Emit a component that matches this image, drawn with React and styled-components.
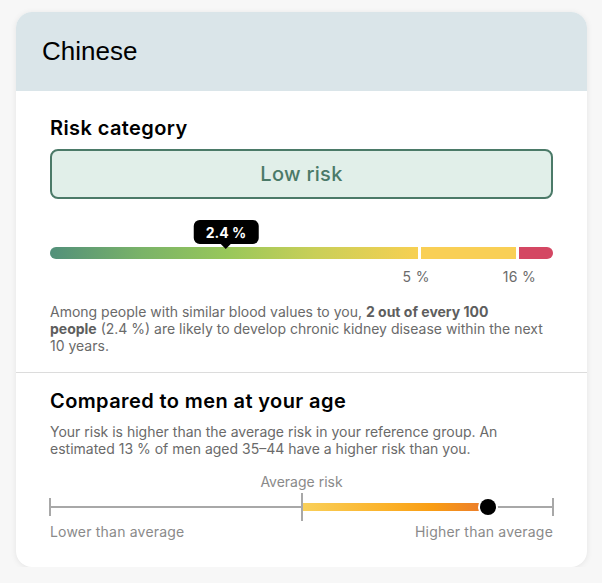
import styled, { createGlobalStyle } from "styled-components"

const GlobalStyle = createGlobalStyle`
  html, body {
    margin: 0;
    padding: 0;
    background: #f7f7f7;
  }
  body {
    font-family: Inter, "Noto Sans", sans-serif;
    color: #111;
  }
`;

const Card = styled.div`
  margin: 12px 15px 0 16px;
  width: 571px;
  background: #fff;
  border-radius: 16px;
  overflow: hidden;
  box-shadow: 0 1px 6px rgba(0, 0, 0, 0.08);
`;

const CardHeader = styled.div`
  background: #dae5e9;
  height: 79px;
  display: flex;
  align-items: center;
  padding: 0 26px;
  h1 {
    margin: 0;
    font-family: "Liberation Sans", Arial, sans-serif;
    font-weight: 400;
    font-size: 26px;
    color: #000;
  }
`;

const Section = styled.section`
  padding: ${(p) => p.$pad};
  border-top: ${(p) => (p.$divider ? "1px solid #dcdcdc" : "none")};
`;

const Heading = styled.h2`
  margin: 0 0 ${(p) => p.$gap || 10}px;
  font-size: 20px;
  line-height: 22px;
  letter-spacing: 0.4px;
  font-weight: 600;
  color: #000;
`;

const CategoryBox = styled.div`
  height: 46px;
  border: 2px solid #4b7a68;
  border-radius: 8px;
  background: #e1efe9;
  color: #4b7a68;
  font-size: 20px;
  font-weight: 500;
  letter-spacing: 0.3px;
  display: flex;
  align-items: center;
  justify-content: center;
`;

const BarWrap = styled.div`
  position: relative;
  margin-top: 48px;
`;

const Bar = styled.div`
  display: flex;
  gap: 3px;
  height: 12px;
`;

const Segment = styled.div`
  height: 100%;
  flex: ${(p) => p.$grow} 0 0;
  background: ${(p) => p.$bg};
  border-radius: ${(p) => p.$radius || "0"};
`;

const Tooltip = styled.div`
  position: absolute;
  bottom: 100%;
  margin-bottom: 3px;
  transform: translateX(-50%);
  background: #000;
  color: #fff;
  font-size: 14px;
  font-weight: 700;
  line-height: 17px;
  padding: 4px 12px 3px;
  border-radius: 6px;
  white-space: nowrap;
  &::after {
    content: "";
    position: absolute;
    left: 50%;
    top: 100%;
    transform: translateX(-50%);
    border: 5px solid transparent;
    border-top-color: #000;
    border-bottom: 0;
  }
`;

const Ticks = styled.div`
  position: relative;
  height: 18px;
  margin-top: 9px;
`;

const TickLabel = styled.span`
  position: absolute;
  top: 0;
  transform: translateX(-50%);
  font-size: 14px;
  line-height: 18px;
  letter-spacing: 0.3px;
  color: #6b6b6b;
  white-space: nowrap;
`;

const Text = styled.p`
  margin: ${(p) => p.$margin || "0"};
  font-size: 14px;
  line-height: 17px;
  color: #6a6a6a;
  b {
    font-weight: 700;
    color: #5e5e5e;
  }
`;

const Compare = styled.div`
  margin-top: 16px;
  display: flex;
  flex-direction: column;
`;

const AvgLabel = styled.div`
  text-align: center;
  font-size: 14px;
  line-height: 17px;
  color: #8a8a8a;
`;

const Scale = styled.div`
  position: relative;
  height: 28px;
  margin-top: 3px;
  &::before {
    content: "";
    position: absolute;
    left: 0;
    right: 0;
    top: 13px;
    height: 2px;
    background: #a8a8a8;
  }
`;

const Tick = styled.div`
  position: absolute;
  left: ${(p) => p.$left};
  top: ${(p) => (p.$tall ? 0 : 5)}px;
  width: 2px;
  height: ${(p) => (p.$tall ? 28 : 18)}px;
  margin-left: -1px;
  background: #a8a8a8;
`;

const RiskFill = styled.div`
  position: absolute;
  top: 10px;
  height: 8px;
  background: linear-gradient(90deg, #f9d05a 0%, #fbb22a 45%, #f99d14 70%, #ea7a2e 100%);
`;

const Dot = styled.div`
  position: absolute;
  top: 6px;
  width: 16px;
  height: 16px;
  margin-left: -8px;
  border-radius: 50%;
  background: #000;
  box-shadow: 0 0 0 2px #fff;
`;

const ScaleLabels = styled.div`
  display: flex;
  justify-content: space-between;
  margin-top: 2px;
  font-size: 14px;
  line-height: 17px;
  letter-spacing: 0.2px;
  color: #8a8a8a;
`;

function RiskBar({ value }) {
  return (
    <BarWrap>
      <Tooltip style={{ left: "35%" }}>{value} %</Tooltip>
      <Bar>
        <Segment
          $grow={367}
          $radius="6px 0 0 6px"
          $bg="linear-gradient(90deg, #52907a 0%, #7ab368 25%, #98c75a 48%, #c9cf58 72%, #f7d052 100%)"
        />
        <Segment $grow={95} $bg="#f9cf55" />
        <Segment $grow={34} $radius="0 6px 6px 0" $bg="#d44763" />
      </Bar>
      <Ticks>
        <TickLabel style={{ left: "72.8%" }}>5 %</TickLabel>
        <TickLabel style={{ left: "93.3%" }}>16 %</TickLabel>
      </Ticks>
    </BarWrap>
  );
}

function CompareScale({ position }) {
  return (
    <Compare>
      <AvgLabel>Average risk</AvgLabel>
      <Scale>
        <RiskFill style={{ left: "50%", width: `${position - 50}%` }} />
        <Tick $left="0%" />
        <Tick $left="50%" $tall />
        <Tick $left="100%" />
        <Dot style={{ left: `${position}%` }} />
      </Scale>
      <ScaleLabels>
        <span>Lower than average</span>
        <span>Higher than average</span>
      </ScaleLabels>
    </Compare>
  );
}

export default function App() {
  return (
    <>
      <GlobalStyle />
      <Card>
        <CardHeader>
          <h1>Chinese</h1>
        </CardHeader>
        <Section $pad="26px 34px 18px">
          <Heading>Risk category</Heading>
          <CategoryBox>Low risk</CategoryBox>
          <RiskBar value="2.4" />
          <Text $margin="17px 0 0">
            Among people with similar blood values to you, <b>2 out of every 100</b>
            <br />
            <b>people</b> (2.4 %) are likely to develop chronic kidney disease within the next
            <br />
            10 years.
          </Text>
        </Section>
        <Section $divider $pad="17px 34px 27px">
          <Heading $gap={11}>Compared to men at your age</Heading>
          <Text>
            Your risk is higher than the average risk in your reference group. An
            estimated 13 % of men aged 35–44 have a higher risk than you.
          </Text>
          <CompareScale position={87} />
        </Section>
      </Card>
    </>
  );
}
